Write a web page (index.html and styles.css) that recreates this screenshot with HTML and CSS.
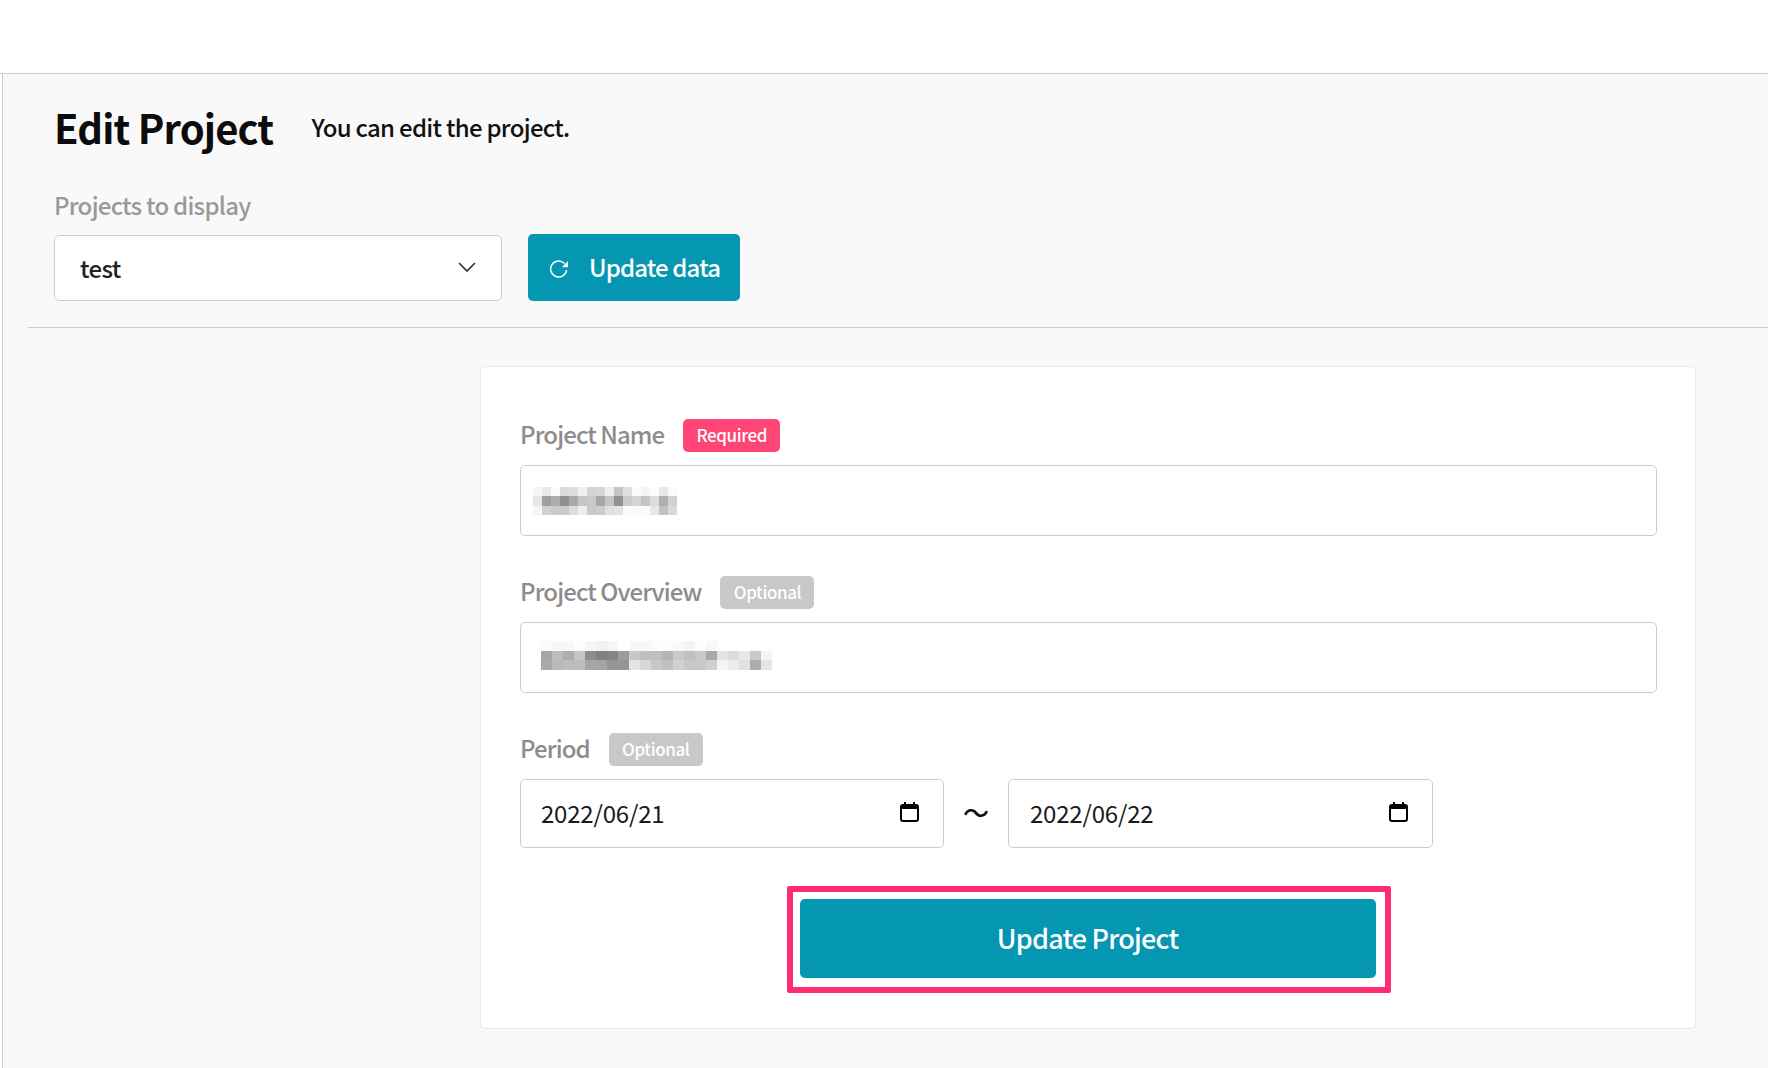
FILE: index.html
```html
<!DOCTYPE html>
<html lang="en">
<head>
<meta charset="utf-8">
<title>Edit Project</title>
<link rel="stylesheet" href="styles.css">
</head>
<body>
<header class="topbar"></header>
<main class="main">
  <section class="page-head">
    <div class="title-row">
      <h1 class="title">Edit Project</h1>
      <p class="subtitle">You can edit the project.</p>
    </div>
    <div class="display-label">Projects to display</div>
    <div class="controls">
      <div class="select">
        <span>test</span>
        <svg class="chevron" viewBox="0 0 18 11" aria-hidden="true"><path d="M1 1l8 8 8-8" fill="none" stroke="#333" stroke-width="1.7"/></svg>
      </div>
      <button class="update-data" type="button">
        <svg class="refresh" viewBox="0 0 20 20" aria-hidden="true"><path d="M15.4 5.4A8 8 0 1 0 17.6 12" fill="none" stroke="#fff" stroke-width="1.5"/><path d="M19 3v6.2h-6.2z" fill="#fff"/></svg>
        <span class="update-data-text">Update data</span>
      </button>
    </div>
  </section>
  <div class="divider"></div>
  <form class="card">
    <div class="field-head">
      <label class="field-label">Project Name</label>
      <span class="badge badge-required">Required</span>
    </div>
    <div class="input">
      <svg class="mosaic mosaic-name" viewBox="0 0 16 3" preserveAspectRatio="none" aria-hidden="true" shape-rendering="crispEdges">
        <rect x="0" y="0" width="1" height="1" fill="#f5f5f5"/><rect x="1" y="0" width="1" height="1" fill="#e8e8e8"/><rect x="2" y="0" width="1" height="1" fill="#fbfbfb"/><rect x="3" y="0" width="1" height="1" fill="#d9dbdb"/><rect x="4" y="0" width="1" height="1" fill="#dcdede"/><rect x="5" y="0" width="1" height="1" fill="#f0f0f0"/><rect x="6" y="0" width="1" height="1" fill="#d2d4d4"/><rect x="7" y="0" width="1" height="1" fill="#d6d8d8"/><rect x="8" y="0" width="1" height="1" fill="#eeeeee"/><rect x="9" y="0" width="1" height="1" fill="#c4c6c6"/><rect x="10" y="0" width="1" height="1" fill="#e0e0e0"/><rect x="11" y="0" width="1" height="1" fill="#fafafa"/><rect x="12" y="0" width="1" height="1" fill="#f4f4f4"/><rect x="13" y="0" width="1" height="1" fill="#fcfcfc"/><rect x="14" y="0" width="1" height="1" fill="#e8e8e8"/><rect x="15" y="0" width="1" height="1" fill="#fafafa"/>
        <rect x="0" y="1" width="1" height="1" fill="#e8e8e8"/><rect x="1" y="1" width="1" height="1" fill="#9e9fa0"/><rect x="2" y="1" width="1" height="1" fill="#adaeae"/><rect x="3" y="1" width="1" height="1" fill="#8f9091"/><rect x="4" y="1" width="1" height="1" fill="#a8a9a9"/><rect x="5" y="1" width="1" height="1" fill="#c4c5c5"/><rect x="6" y="1" width="1" height="1" fill="#c8c9c9"/><rect x="7" y="1" width="1" height="1" fill="#a6a8a8"/><rect x="8" y="1" width="1" height="1" fill="#c4c5c5"/><rect x="9" y="1" width="1" height="1" fill="#909193"/><rect x="10" y="1" width="1" height="1" fill="#cccccc"/><rect x="11" y="1" width="1" height="1" fill="#d4d4d4"/><rect x="12" y="1" width="1" height="1" fill="#c4c5c5"/><rect x="13" y="1" width="1" height="1" fill="#dddddd"/><rect x="14" y="1" width="1" height="1" fill="#aeafb0"/><rect x="15" y="1" width="1" height="1" fill="#d0d2d2"/>
        <rect x="0" y="2" width="1" height="1" fill="#f5f5f5"/><rect x="1" y="2" width="1" height="1" fill="#cfd1d2"/><rect x="2" y="2" width="1" height="1" fill="#c8c9c9"/><rect x="3" y="2" width="1" height="1" fill="#c8c9c9"/><rect x="4" y="2" width="1" height="1" fill="#dcdcdc"/><rect x="5" y="2" width="1" height="1" fill="#ecedee"/><rect x="6" y="2" width="1" height="1" fill="#c8c9c9"/><rect x="7" y="2" width="1" height="1" fill="#cccdcd"/><rect x="8" y="2" width="1" height="1" fill="#e0e0e0"/><rect x="9" y="2" width="1" height="1" fill="#e4e4e4"/><rect x="10" y="2" width="1" height="1" fill="#fcfcfc"/><rect x="11" y="2" width="1" height="1" fill="#fafafa"/><rect x="12" y="2" width="1" height="1" fill="#fcfcfc"/><rect x="13" y="2" width="1" height="1" fill="#e6e8e8"/><rect x="14" y="2" width="1" height="1" fill="#c0c1c1"/><rect x="15" y="2" width="1" height="1" fill="#d8dada"/>
      </svg>
    </div>
    <div class="field-head field-gap">
      <label class="field-label">Project Overview</label>
      <span class="badge badge-optional">Optional</span>
    </div>
    <div class="input">
      <svg class="mosaic mosaic-overview" viewBox="0 0 21 3" preserveAspectRatio="none" aria-hidden="true" shape-rendering="crispEdges">
        <rect x="0" y="0" width="1" height="1" fill="#fafafa"/><rect x="1" y="0" width="1" height="1" fill="#f8f8f8"/><rect x="2" y="0" width="1" height="1" fill="#f8f8f8"/><rect x="3" y="0" width="1" height="1" fill="#fcfcfc"/><rect x="4" y="0" width="1" height="1" fill="#f6f6f6"/><rect x="5" y="0" width="1" height="1" fill="#f2f2f2"/><rect x="6" y="0" width="1" height="1" fill="#f6f6f6"/><rect x="7" y="0" width="1" height="1" fill="#ffffff"/><rect x="8" y="0" width="1" height="1" fill="#f8f8f8"/><rect x="9" y="0" width="1" height="1" fill="#f8f8f8"/><rect x="10" y="0" width="1" height="1" fill="#fcfcfc"/><rect x="11" y="0" width="1" height="1" fill="#fcfcfc"/><rect x="12" y="0" width="1" height="1" fill="#f8f8f8"/><rect x="13" y="0" width="1" height="1" fill="#f4f4f4"/><rect x="14" y="0" width="1" height="1" fill="#fcfcfc"/><rect x="15" y="0" width="1" height="1" fill="#f8f8f8"/>
        <rect x="0" y="1" width="1" height="1" fill="#a4a5a5"/><rect x="1" y="1" width="1" height="1" fill="#bcbdbd"/><rect x="2" y="1" width="1" height="1" fill="#acadae"/><rect x="3" y="1" width="1" height="1" fill="#c4c5c5"/><rect x="4" y="1" width="1" height="1" fill="#8c8c8e"/><rect x="5" y="1" width="1" height="1" fill="#808082"/><rect x="6" y="1" width="1" height="1" fill="#848486"/><rect x="7" y="1" width="1" height="1" fill="#9c9c9e"/><rect x="8" y="1" width="1" height="1" fill="#c8c8c8"/><rect x="9" y="1" width="1" height="1" fill="#c0c0c0"/><rect x="10" y="1" width="1" height="1" fill="#c0c0c0"/><rect x="11" y="1" width="1" height="1" fill="#b4b6b6"/><rect x="12" y="1" width="1" height="1" fill="#c8c8c8"/><rect x="13" y="1" width="1" height="1" fill="#c0c0c0"/><rect x="14" y="1" width="1" height="1" fill="#c8c8c8"/><rect x="15" y="1" width="1" height="1" fill="#a8a9aa"/><rect x="16" y="1" width="1" height="1" fill="#e4e4e4"/><rect x="17" y="1" width="1" height="1" fill="#dcdcdc"/><rect x="18" y="1" width="1" height="1" fill="#e8e8e8"/><rect x="19" y="1" width="1" height="1" fill="#c8caca"/><rect x="20" y="1" width="1" height="1" fill="#f4f4f4"/>
        <rect x="0" y="2" width="1" height="1" fill="#a8a9a9"/><rect x="1" y="2" width="1" height="1" fill="#b8b9b9"/><rect x="2" y="2" width="1" height="1" fill="#bcbdbd"/><rect x="3" y="2" width="1" height="1" fill="#bcbdbd"/><rect x="4" y="2" width="1" height="1" fill="#a4a5a6"/><rect x="5" y="2" width="1" height="1" fill="#a4a5a6"/><rect x="6" y="2" width="1" height="1" fill="#949596"/><rect x="7" y="2" width="1" height="1" fill="#949596"/><rect x="8" y="2" width="1" height="1" fill="#e4e4e4"/><rect x="9" y="2" width="1" height="1" fill="#d8d8d8"/><rect x="10" y="2" width="1" height="1" fill="#c8c8c8"/><rect x="11" y="2" width="1" height="1" fill="#c0c0c0"/><rect x="12" y="2" width="1" height="1" fill="#d0d0d0"/><rect x="13" y="2" width="1" height="1" fill="#c8c8c8"/><rect x="14" y="2" width="1" height="1" fill="#c8c8c8"/><rect x="15" y="2" width="1" height="1" fill="#d0d0d0"/><rect x="16" y="2" width="1" height="1" fill="#f4f4f4"/><rect x="17" y="2" width="1" height="1" fill="#ececec"/><rect x="18" y="2" width="1" height="1" fill="#e0e2e2"/><rect x="19" y="2" width="1" height="1" fill="#acaeae"/><rect x="20" y="2" width="1" height="1" fill="#e4e6e6"/>
      </svg>
    </div>
    <div class="field-head field-gap">
      <label class="field-label">Period</label>
      <span class="badge badge-optional">Optional</span>
    </div>
    <div class="period">
      <div class="date date-from">
        <span>2022/06/21</span>
        <svg class="calendar" viewBox="0 0 19 20" aria-hidden="true"><path d="M4 0h2v3H4zM13 0h2v3h-2z" fill="#000"/><path d="M1 5a2 2 0 0 1 2-2h13a2 2 0 0 1 2 2v12a2 2 0 0 1-2 2H3a2 2 0 0 1-2-2z" fill="none" stroke="#000" stroke-width="2"/><path d="M1 3h17v4H1z" fill="#000"/></svg>
      </div>
      <span class="tilde">〜</span>
      <div class="date date-to">
        <span>2022/06/22</span>
        <svg class="calendar" viewBox="0 0 19 20" aria-hidden="true"><path d="M4 0h2v3H4zM13 0h2v3h-2z" fill="#000"/><path d="M1 5a2 2 0 0 1 2-2h13a2 2 0 0 1 2 2v12a2 2 0 0 1-2 2H3a2 2 0 0 1-2-2z" fill="none" stroke="#000" stroke-width="2"/><path d="M1 3h17v4H1z" fill="#000"/></svg>
      </div>
    </div>
    <div class="highlight">
      <button class="submit" type="button">Update Project</button>
    </div>
  </form>
</main>
</body>
</html>
```
FILE: styles.css
```css
* { box-sizing: border-box; }
html, body { margin: 0; height: 100%; }
body {
  display: flex;
  flex-direction: column;
  height: 100vh;
  overflow: hidden;
  background: #fff;
  color: #111;
  font-family: "Noto Sans CJK JP", "Noto Sans", sans-serif;
}
.topbar { flex: 0 0 74px; background: #fff; border-bottom: 1px solid #ccc; }
.main {
  flex: 1;
  display: flex;
  flex-direction: column;
  margin-left: 2px;
  border-left: 1px solid #ccc;
  background: #f9f9f9;
}
.page-head { padding: 31px 0 0 51px; }
.title-row { display: flex; align-items: center; height: 44px; }
.title { margin: 0; font-size: 40px; line-height: 44px; font-weight: 700; letter-spacing: -0.85px; color: #0c0c0c; }
.subtitle { margin: 0 0 0 38px; font-size: 24px; line-height: 44px; font-weight: 500; letter-spacing: -0.72px; color: #111; }
.display-label { margin-top: 40px; font-size: 24px; line-height: 32px; font-weight: 500; letter-spacing: -0.74px; color: #999; }
.controls { display: flex; align-items: center; height: 67px; margin-top: 13px; }
.select {
  display: flex;
  align-items: center;
  justify-content: space-between;
  width: 448px;
  height: 66px;
  padding: 0 25px;
  background: #fff;
  border: 1px solid #ccc;
  border-radius: 5px;
  font-size: 24px;
  font-weight: 500;
  letter-spacing: -0.6px;
  color: #222;
}
.chevron { width: 18px; height: 11px; margin-top: -1px; }
.update-data {
  display: flex;
  align-items: center;
  width: 212px;
  height: 67px;
  margin-left: 26px;
  padding: 0 0 0 21px;
  border: 0;
  border-radius: 5px;
  background: #0596b2;
  color: #fff;
  font: 500 24px "Noto Sans CJK JP", "Noto Sans", sans-serif;
  letter-spacing: -0.85px;
}
.update-data-text { margin-bottom: 2px; }
.refresh { width: 20px; height: 20px; margin-right: 20px; }
.divider { height: 1px; margin: 26px 0 0 25px; background: #ccc; }
.card {
  align-self: flex-end;
  width: 1216px;
  height: 663px;
  margin: 38px 72px 0 0;
  padding: 52px 38px 0 39px;
  background: #fff;
  border: 1px solid #e8e8e8;
  border-radius: 5px;
}
.field-head { display: flex; align-items: center; height: 33px; }
.field-gap { margin-top: 40px; }
.field-label { padding-bottom: 4px; font-size: 24px; line-height: 33px; font-weight: 500; letter-spacing: -0.9px; color: #8c8c8c; }
.badge {
  display: flex;
  align-items: center;
  justify-content: center;
  height: 33px;
  margin-left: 19px;
  padding-bottom: 2px;
  border-radius: 5px;
  color: #fff;
  font-size: 17px;
  font-weight: 500;
  letter-spacing: -0.4px;
}
.badge-required { width: 97px; background: #ff4476; }
.badge-optional { width: 94px; background: #c8c8c8; }
.input {
  display: flex;
  align-items: center;
  height: 71px;
  margin-top: 13px;
  background: #fff;
  border: 1px solid #ccc;
  border-radius: 5px;
}
.mosaic { display: block; filter: blur(0.6px); }
.mosaic-name { width: 144px; height: 28px; margin: 0 0 0 12px; }
.mosaic-overview { width: 231px; height: 29px; margin: -5px 0 0 20px; }
.period { display: flex; align-items: stretch; height: 69px; margin-top: 13px; }
.date {
  display: flex;
  align-items: center;
  justify-content: space-between;
  height: 69px;
  padding: 0 24px 3px 20px;
  background: #fff;
  border: 1px solid #ccc;
  border-radius: 5px;
  font-size: 24px;
  letter-spacing: -0.2px;
  color: #1a1a1a;
}
.date-from { width: 424px; }
.date-to { width: 425px; padding-left: 21px; }
.calendar { width: 19px; height: 20px; }
.tilde { display: flex; align-items: center; justify-content: center; width: 64px; padding-bottom: 4px; font-size: 26px; font-weight: 500; color: #111; }
.highlight {
  width: 604px;
  height: 107px;
  margin: 38px auto 0;
  padding: 7px 9px 9px 7px;
  border: 6px solid #ff2d6f;
  border-radius: 2px;
}
.submit {
  display: block;
  width: 100%;
  height: 79px;
  padding: 0 0 2px;
  border: 0;
  border-radius: 5px;
  background: #0596b2;
  color: #fff;
  font: 500 27px "Noto Sans CJK JP", "Noto Sans", sans-serif;
  letter-spacing: -0.8px;
}
```
